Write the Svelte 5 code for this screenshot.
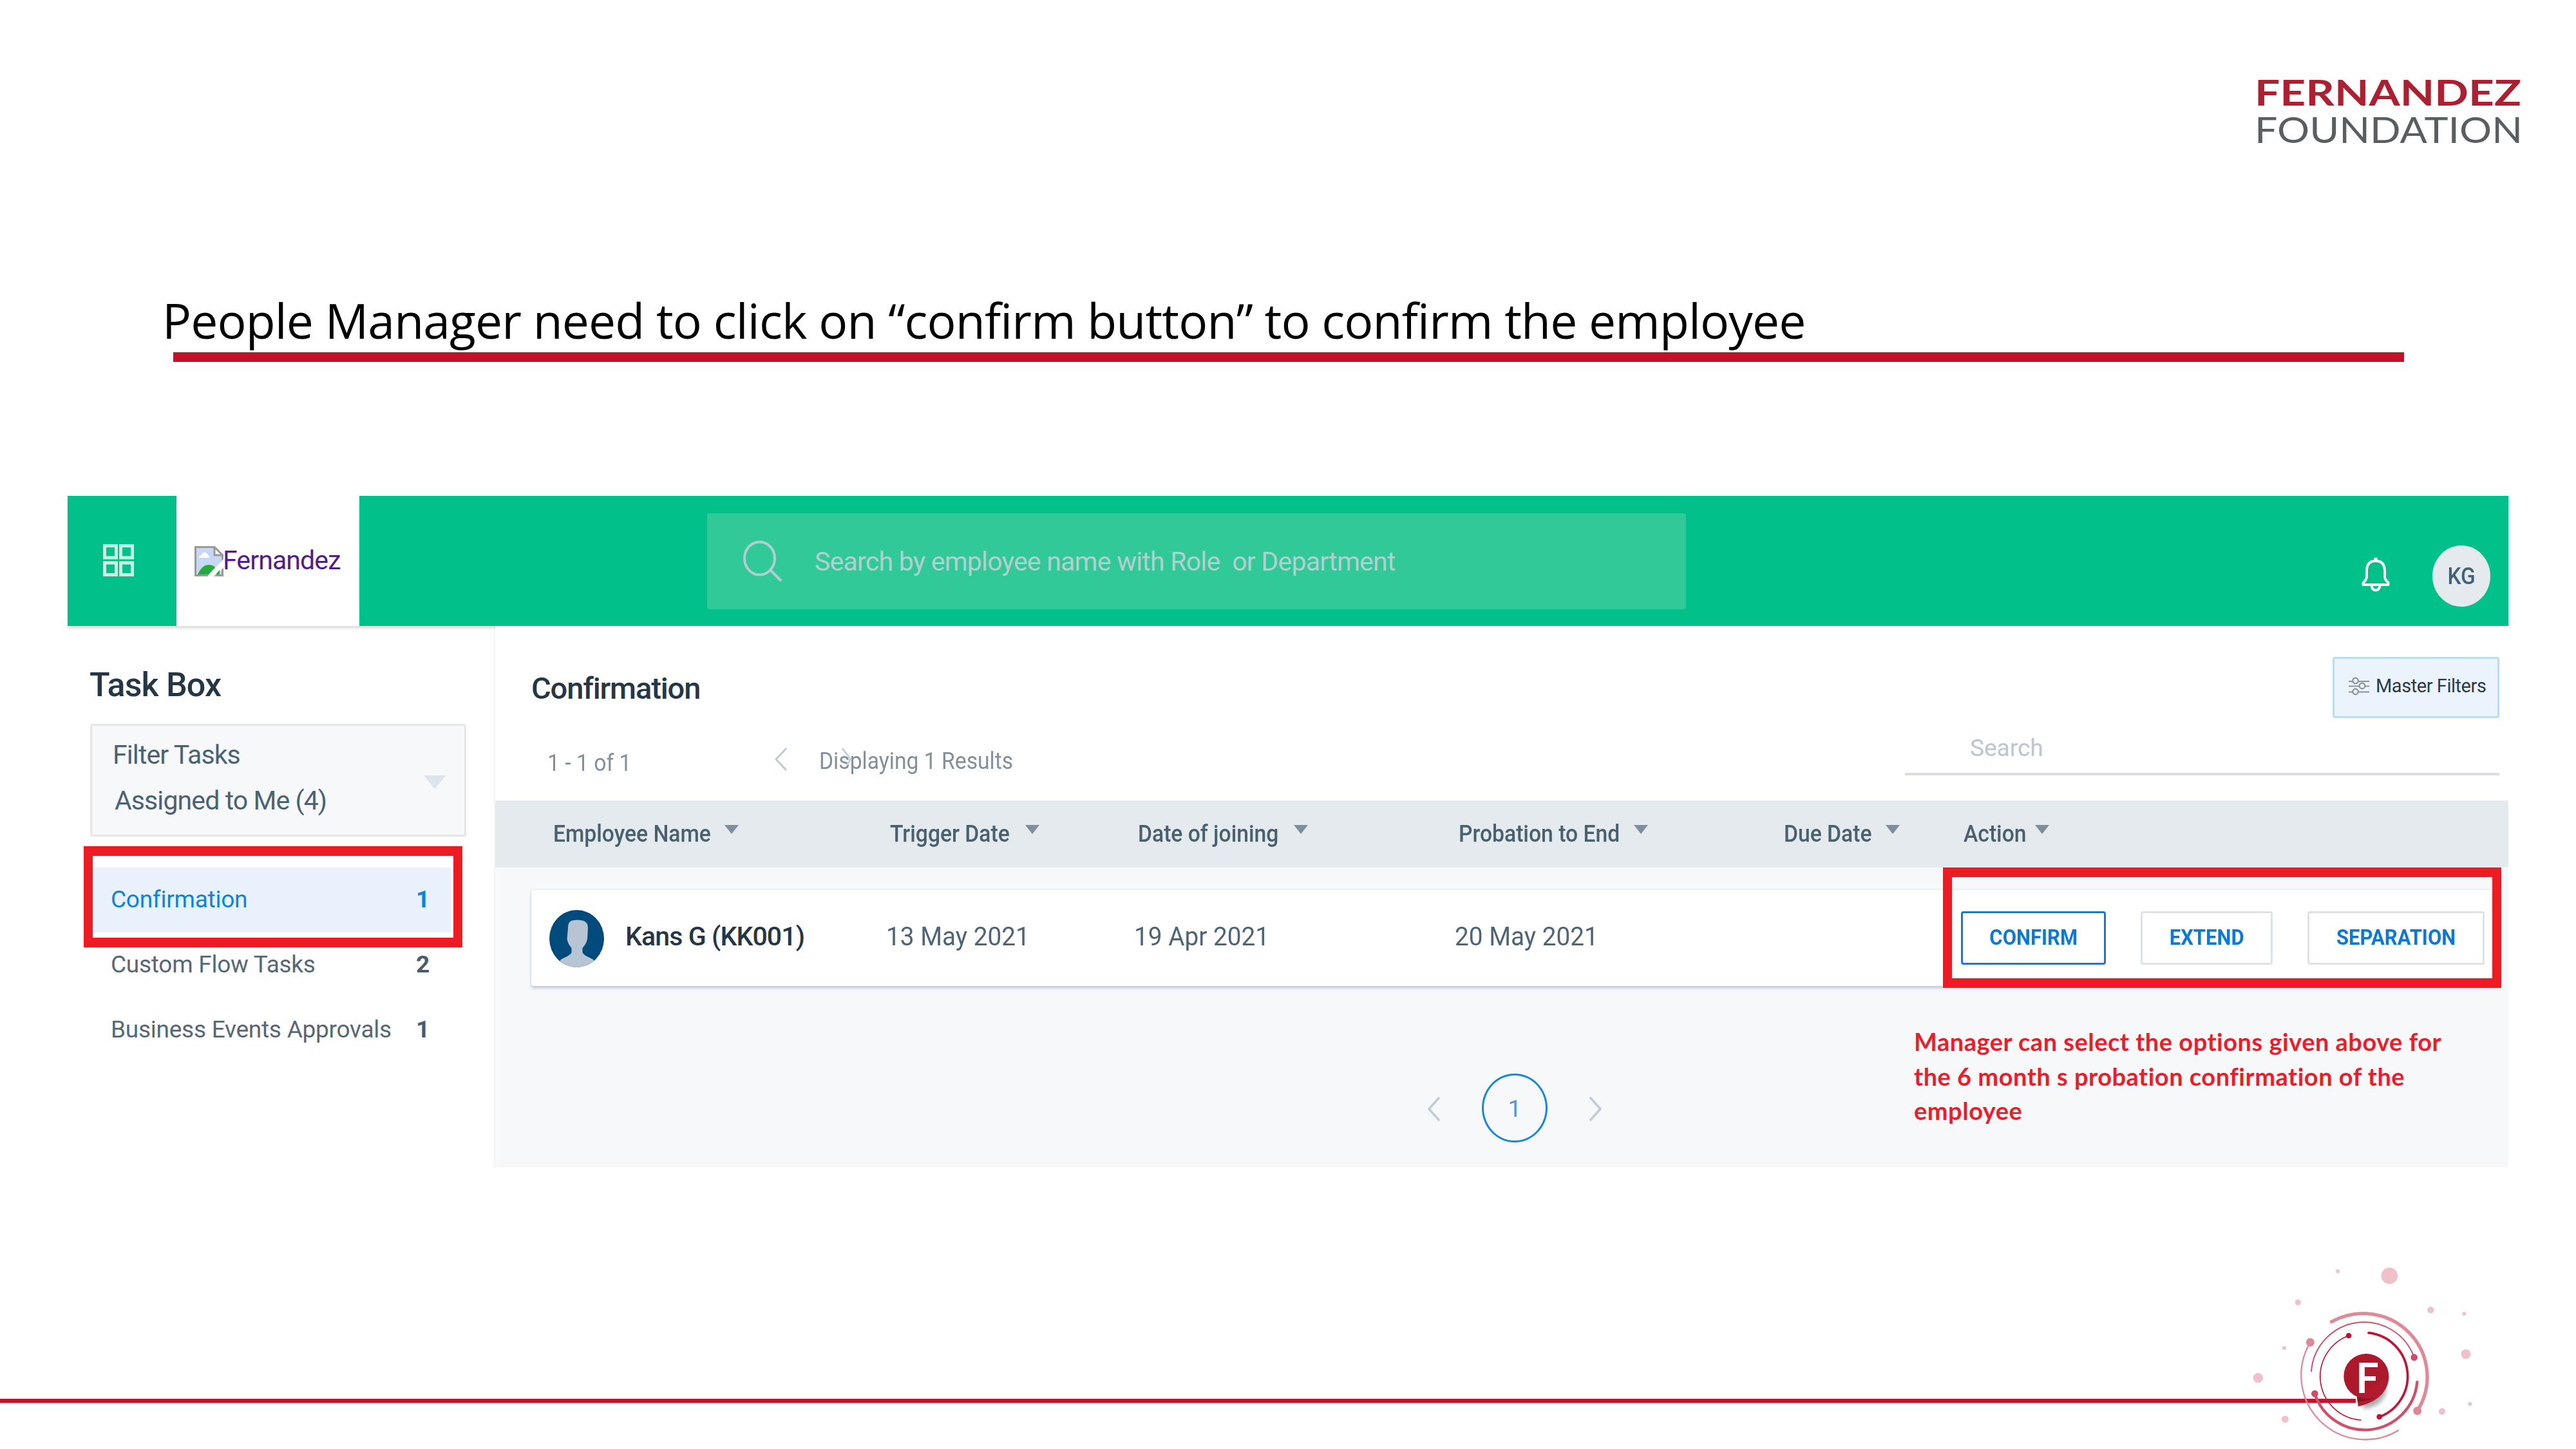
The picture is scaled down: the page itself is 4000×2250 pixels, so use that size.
<script>
  const tasks = [
    { name: 'Confirmation', count: 1, active: true },
    { name: 'Custom Flow Tasks', count: 2, active: false },
    { name: 'Business Events Approvals', count: 1, active: false }
  ];

  const columns = [
    { label: 'Employee Name', cls: 'c-name' },
    { label: 'Trigger Date', cls: 'c-trigger' },
    { label: 'Date of joining', cls: 'c-joining' },
    { label: 'Probation to End', cls: 'c-probation' },
    { label: 'Due Date', cls: 'c-due' },
    { label: 'Action', cls: 'c-action' }
  ];

  const dots = [
    [570, 102, 9], [811, 123, 38.5], [385, 247, 13.5], [1003, 282, 15.5],
    [1159, 300, 9], [321, 460, 9], [1167, 488, 22.5], [199, 599, 23],
    [1186, 720, 9], [1056, 755, 15.5], [325, 791, 16.5]
  ];
</script>

<div class="slide">
  <div class="brandmark">
    <svg width="460" height="150" viewBox="0 0 460 150">
      <text x="19" y="62" class="fernandez" textLength="414" lengthAdjust="spacingAndGlyphs">FERNANDEZ</text>
      <text x="19" y="120" class="foundation" textLength="416" lengthAdjust="spacingAndGlyphs">FOUNDATION</text>
    </svg>
  </div>

  <h1>People Manager need to click on “confirm button” to confirm the employee</h1>
  <div class="rule"></div>

  <div class="app">
    <header>
      <div class="apps">
        <svg width="48" height="50" viewBox="0 0 48 50" fill="none" stroke="#c9f0e2" stroke-width="5">
          <rect x="2.5" y="2.5" width="18" height="18.5" />
          <rect x="27.5" y="2.5" width="18" height="18.5" />
          <rect x="2.5" y="29" width="18" height="18.5" />
          <rect x="27.5" y="29" width="18" height="18.5" />
        </svg>
      </div>
      <div class="company">
        <svg width="45" height="47" viewBox="0 0 45 47">
          <path d="M1.5 1.5H31L43.500 14V45.500H1.500Z" fill="#c6d8f4" stroke="#9a9a9a" stroke-width="3" />
          <path d="M31 1.500V14H43.500Z" fill="#fff" stroke="#9a9a9a" stroke-width="3" />
          <path d="M7 18q0-4 4-4q2-5 6-4q4 1 4 5q3 0 2 3Z" fill="#fff" />
          <path d="M5 44q6-14 16-15q8 0 11 4L22 44Z" fill="#22ad3e" />
          <path d="M45 20V34L30 47H20L36 30Z" fill="#fff" />
          <path d="M33 44l6-7v7Z" fill="#22ad3e" />
        </svg>
        <span>Fernandez</span>
      </div>
      <div class="search">
        <svg width="62" height="66" viewBox="0 0 62 66" fill="none" stroke="#b3cdd1" stroke-width="4">
          <ellipse cx="25.500" cy="28" rx="23.500" ry="25.500" />
          <path d="M42 46L59 63" />
        </svg>
        <span>Search by employee name with Role&nbsp; or Department</span>
      </div>
      <div class="bell">
        <svg width="44" height="54" viewBox="0 0 44 54" fill="none" stroke="#fff" stroke-width="3.800" stroke-linejoin="round">
          <path d="M22 1V6" stroke-width="5" />
          <path d="M2.500 43V39.500Q8 36 8 30V22Q8 6 22 6Q36 6 36 22V30Q36 36 41.500 39.500V43Z" />
          <path d="M15.500 44Q16 51.500 22 51.500Q28 51.500 28.500 44" />
        </svg>
      </div>
      <div class="user"><span>KG</span></div>
    </header>

    <div class="body">
      <aside>
        <h2>Task Box</h2>
        <div class="filter">
          <div class="filter-text">
            <span class="f1">Filter Tasks</span>
            <span class="f2">Assigned to Me (4)</span>
          </div>
          <svg class="caret" width="34" height="21" viewBox="0 0 34 21"><path d="M0 0H34L17 21Z" fill="#dde4eb" /></svg>
        </div>
        <nav>
          {#each tasks as task}
            <div class="task" class:active={task.active}>
              <span class="task-name">{task.name}</span>
              <span class="task-count">{task.count}</span>
            </div>
          {/each}
          <div class="mark mark-task"></div>
        </nav>
      </aside>

      <main>
        <div class="toolbar">
          <div class="heading">
            <h3>Confirmation</h3>
            <div class="meta">
              <div class="range"><span>1 - 1 of 1</span></div>
              <svg width="20" height="36" viewBox="0 0 20 36" fill="none" stroke="#c0c8d6" stroke-width="3"><path d="M18 1L2 18L18 35" /></svg>
              <div class="shown">
                <span>Displaying 1 Results</span>
                <svg class="ghost" width="18" height="36" viewBox="0 0 18 36" fill="none" stroke="#c9d0dc" stroke-width="3"><path d="M2 1L15 18L9 27" /></svg>
              </div>
            </div>
          </div>
          <div class="tools">
            <div class="master">
              <svg width="32" height="29" viewBox="0 0 32 29" fill="none" stroke="#8d9296" stroke-width="2.200">
                <path d="M0 7H6M15 7H32M0 14.500H16M25 14.500H32M0 23.500H6M15 23.500H32" />
                <circle cx="10.500" cy="6" r="4.300" />
                <circle cx="21" cy="14" r="4.300" />
                <circle cx="10.500" cy="23" r="4.300" />
              </svg>
              <span>Master Filters</span>
            </div>
            <div class="find"><span>Search</span></div>
          </div>
        </div>

        <div class="thead">
          {#each columns as col}
            <div class="th {col.cls}">
              <span>{col.label}</span>
              <svg width="22" height="14" viewBox="0 0 22 14"><path d="M0 0H22L11 14Z" fill="#7e8e9d" /></svg>
            </div>
          {/each}
        </div>

        <div class="card">
          <div class="person">
            <svg width="85" height="89" viewBox="0 0 85 89">
              <defs><clipPath id="face"><ellipse cx="42.500" cy="44.500" rx="42.500" ry="44.500" /></clipPath></defs>
              <g clip-path="url(#face)">
                <rect width="85" height="89" fill="#004b7c" />
                <path d="M43 15.500C55 15.500 60 19 60 28L59 45C58 51 55 55 51.500 59V66C54 71 61 73 68 77L76 89H10L18 77C25 73 32 71 34.500 66V59C31 55 28.500 51 27.500 45L29 28C29 19 32 15.500 43 15.500Z" fill="#b7c4d4" />
              </g>
            </svg>
            <span>Kans G (KK001)</span>
          </div>
          <div class="date d1"><span>13 May 2021</span></div>
          <div class="date d2"><span>19 Apr 2021</span></div>
          <div class="date d3"><span>20 May 2021</span></div>
          <div class="actions">
            <button class="primary"><span>CONFIRM</span></button>
            <button class="extend"><span>EXTEND</span></button>
            <button class="separation"><span>SEPARATION</span></button>
          </div>
        </div>

        <div class="below">
          <div class="pager">
            <svg width="20" height="38" viewBox="0 0 20 38" fill="none" stroke="#c3cad8" stroke-width="3.500"><path d="M18 1L2 19L18 37" /></svg>
            <span class="page">1</span>
            <svg width="20" height="38" viewBox="0 0 20 38" fill="none" stroke="#c3cad8" stroke-width="3.500"><path d="M2 1L18 19L2 37" /></svg>
          </div>
          <p class="note">Manager can select the options given above for<br />the 6 month s probation confirmation of the<br />employee</p>
        </div>
        <div class="mark mark-actions"></div>
      </main>
    </div>
  </div>

  <div class="footline"></div>
  <svg class="emblem" width="460" height="310" viewBox="0 0 1380 930" fill="none" stroke-linecap="round">
    <defs>
      <filter id="soft" x="-30%" y="-30%" width="160%" height="160%"><feGaussianBlur stdDeviation="9" /></filter>
    </defs>
    {#each dots as [cx, cy, r]}
      <circle {cx} {cy} {r} fill="#efc2cb" />
    {/each}
    <path d="M541 337A299 295 0 0 1 943 748" stroke="#e08a98" stroke-width="16" />
    <circle cx="941" cy="752" r="19.500" fill="#e08796" />
    <path d="M442 434A299 299 0 0 0 852 844" stroke="#e08a98" stroke-width="7" />
    <circle cx="442" cy="433" r="19.500" fill="#e08796" />
    <path d="M447 568A247 247 0 0 1 926 503" stroke="#d24f69" stroke-width="6" />
    <circle cx="926" cy="503" r="16" fill="#d24a65" />
    <path d="M463 672A245 245 0 0 0 940 618" stroke="#d24f69" stroke-width="13" />
    <circle cx="463" cy="672" r="16" fill="#d24a65" />
    <path d="M621 402A203 203 0 0 0 678 795" stroke="#c41230" stroke-width="5" />
    <circle cx="621" cy="402" r="13" fill="#c4102f" />
    <path d="M714 389A203 203 0 0 1 764 781" stroke="#c41230" stroke-width="11" />
    <circle cx="764" cy="780" r="13" fill="#c4102f" />
    <path d="M800 640Q790 735 690 742L680 700Z" fill="#777" opacity=".6" filter="url(#soft)" />
    <path d="M657 690V732L663 736L700 722V690Z" fill="#fff" />
    <circle cx="703" cy="591" r="105" fill="#ac192a" />
    <path d="M808 591C806 672 742 715 665 732L660 686Z" fill="#b21b2d" />
    <path d="M660 686Q700 704 745 690Q715 708 662 708Z" fill="#8d1422" />
    <text x="655" y="669" class="initial" textLength="107" lengthAdjust="spacingAndGlyphs">F</text>
  </svg>
</div>

<style>
  :global(body) { background: #fff; }
  .slide {
    position: relative;
    width: 4000px;
    height: 2250px;
    overflow: hidden;
    background: #fff;
    font-family: Roboto, "Liberation Sans", sans-serif;
    display: flex;
    flex-direction: column;
  }
  .slide :global(*) { box-sizing: border-box; }
  svg { display: block; flex: none; }
  span { white-space: nowrap; }
  h1, h2, h3, p { margin: 0; font-weight: 400; }

  .brandmark { height: 150px; margin: 102px 0 0 3482px; }
  .fernandez { font: 700 55px Lato, sans-serif; fill: #ad2031; }
  .foundation { font: 400 56px Lato, sans-serif; fill: #595f61; }

  h1 {
    margin: 200px 0 0 252px;
    height: 90px;
    line-height: 90px;
    font-family: "Open Sans", sans-serif;
    font-size: 75px;
    letter-spacing: -0.86px;
    color: #000;
    white-space: nowrap;
  }
  .rule { width: 3464px; height: 15px; margin: 5px 0 0 269px; background: #c41129; flex: none; }

  .app { width: 3790px; height: 1043px; margin: 208px 0 0 105px; flex: none; display: flex; flex-direction: column; }

  header {
    position: relative;
    height: 202px;
    flex: none;
    display: flex;
    background: #02c08a;
    box-shadow: 0 4px 4px rgba(0, 0, 0, 0.13);
  }
  .apps { width: 169px; padding: 0 0 2px 55px; display: flex; align-items: center; }
  .company {
    width: 284px;
    padding-left: 28px;
    display: flex;
    align-items: center;
    background: #fff;
    color: #551a8b;
    font-size: 41px;
    letter-spacing: -0.9px;
  }
  .company span { padding-bottom: 3px; margin-left: -1px; }
  .search {
    width: 1520px;
    height: 149px;
    margin: 27px 0 0 540px;
    padding-left: 56px;
    display: flex;
    align-items: center;
    gap: 49px;
    border-radius: 4px;
    background: #30c997;
    color: #b3cfd0;
    font-size: 41px;
    letter-spacing: -0.78px;
  }
  .bell { margin: 95px 0 0 1049px; }
  .user {
    width: 90px;
    height: 95px;
    margin: 77px 0 0 66px;
    padding-bottom: 1px;
    border-radius: 50%;
    display: flex;
    align-items: center;
    justify-content: center;
    background: #e5eaee;
    color: #44607a;
    font-size: 37px;
    font-weight: 500;
  }
  .user span { transform: scaleX(0.9); }

  .body { flex: 1; display: flex; }
  aside { width: 664px; padding: 62px 0 0 34px; border-right: 2px solid #f4f5f9; }
  h2 { line-height: 60px; font-size: 52px; font-weight: 500; letter-spacing: -0.85px; color: #253746; }
  .filter {
    width: 584px;
    height: 175px;
    margin: 30px 0 0 1px;
    padding: 10px 29px 0 32px;
    display: flex;
    justify-content: space-between;
    border: 3px solid #e4e6e7;
    border-radius: 4px;
    background: #f6f8fa;
    color: #4a6275;
    font-size: 41px;
    line-height: 71px;
    letter-spacing: -0.9px;
  }
  .filter-text { display: flex; flex-direction: column; }
  .f2 { padding-left: 3px; }
  .caret { margin-top: 67px; }
  nav { position: relative; width: 556px; margin: 48px 0 0 5px; }
  .task {
    height: 101px;
    padding: 0 0 3px 28px;
    display: flex;
    align-items: center;
    justify-content: space-between;
    font-size: 37px;
    letter-spacing: -0.25px;
    color: #566878;
  }
  .task-count { width: 54px; font-weight: 700; color: #4a5c6c; }
  .active { background: #e9f2fc; }
  .active .task-name, .active .task-count { color: #0c83dc; }
  .mark { position: absolute; border-style: solid; border-color: #ed1c24; }
  .mark-task { left: -14px; top: -33px; width: 588px; height: 157px; border-width: 15px 14px; }

  main { position: relative; flex: 1; display: flex; flex-direction: column; background: #f6f8fa; }
  .toolbar { height: 271px; display: flex; justify-content: space-between; padding-right: 14px; background: #fff; }
  .heading { padding: 67px 0 0 56px; }
  h3 { line-height: 60px; font-size: 47px; font-weight: 500; letter-spacing: -1.1px; color: #253746; }
  .meta { display: flex; margin-top: 61px; padding-left: 25px; font-size: 37px; line-height: 50px; color: #82909c; }
  .meta > svg { margin-top: 1px; }
  .range { width: 353px; }
  .range span, .shown span, .th span, .date span { display: inline-block; transform: scaleX(0.91); transform-origin: 0 0; }
  .shown { position: relative; margin: -3px 0 0 49px; }
  .ghost { position: absolute; left: 34px; top: 4px; }
  .tools { width: 923px; padding-top: 48px; display: flex; flex-direction: column; align-items: flex-end; }
  .master {
    width: 259px;
    height: 95px;
    padding: 0 0 5px 22px;
    display: flex;
    align-items: center;
    gap: 10px;
    border: 3px solid #bddcf2;
    border-radius: 4px;
    background: #ebf3fc;
    color: #2d3a46;
    font-size: 29px;
    letter-spacing: -0.45px;
  }
  .find {
    width: 923px;
    height: 89px;
    padding: 22px 0 0 101px;
    border-bottom: 4px solid #d9dfe5;
    color: #bcc5d1;
    font-size: 37px;
    line-height: 50px;
  }

  .thead { height: 104px; padding-left: 90px; display: flex; background: #e5eaee; }
  .th { display: flex; font-size: 37px; line-height: 104px; font-weight: 500; color: #48606f; }
  .th span { width: 0; margin-right: auto; }
  .th svg { margin-top: 38px; }
  .c-name { width: 288px; margin-right: 235px; }
  .c-trigger { width: 232px; margin-right: 153px; }
  .c-joining { width: 264px; margin-right: 234px; }
  .c-probation { width: 294px; margin-right: 211px; }
  .c-due { width: 180px; margin-right: 99px; }
  .c-action { width: 133px; }

  .card {
    height: 149px;
    margin: 35px 12px 0 56px;
    padding-left: 28px;
    display: flex;
    align-items: center;
    background: #fff;
    border-radius: 4px;
    box-shadow: 0 4px 4px rgba(120, 145, 175, 0.36), 0 0 3px rgba(120, 145, 175, 0.25);
    font-size: 41px;
  }
  .person { width: 523px; display: flex; align-items: center; gap: 33px; font-weight: 500; letter-spacing: -0.88px; color: #253746; }
  .person span, .date { padding-bottom: 5px; }
  .person svg { margin-top: 1px; }
  .date { color: #4f6577; }
  .date span { transform: scaleX(0.945); }
  .d1 { width: 385px; }
  .d2 { width: 498px; }
  .d3 { width: 786px; }
  .actions { display: flex; }
  button {
    height: 83px;
    padding: 0 0 3px;
    border: 3px solid #dce2e8;
    border-radius: 4px;
    background: #fff;
    color: #0b78da;
    font: 700 33px Roboto, sans-serif;
  }
  button span { display: inline-block; transform: scaleX(0.94); margin: 0 -10px; }
  .primary { width: 225px; border-color: #1179d6; }
  .extend { width: 205px; margin-left: 54px; }
  .separation { width: 275px; margin-left: 54px; }
  .mark-actions { left: 2248px; top: 375px; width: 867px; height: 187px; border-width: 15px 14px; }

  .below { flex: 1; display: flex; align-items: flex-start; padding-left: 1448px; }
  .pager { display: flex; align-items: center; gap: 64px; margin-top: 136px; }
  .pager svg { margin-top: 3px; }
  .page {
    width: 102px;
    height: 107px;
    border: 3.5px solid #1a86da;
    border-radius: 50%;
    font-size: 37px;
    line-height: 103px;
    text-align: center;
    color: #5a8fe8;
  }
  .note {
    margin: 60px 0 0 485px;
    font: 700 38px/53.5px Lato, sans-serif;
    letter-spacing: 0.5px;
    color: #ed1c2b;
    white-space: nowrap;
  }

  .footline { width: 3658px; height: 7px; margin-top: 359px; background: #c4112e; border-bottom: 1px solid #e8798a; flex: none; }
  .emblem { position: absolute; left: 3440px; top: 1940px; }
  .initial { font: 700 197px Lato, sans-serif; fill: #fff; }
</style>
